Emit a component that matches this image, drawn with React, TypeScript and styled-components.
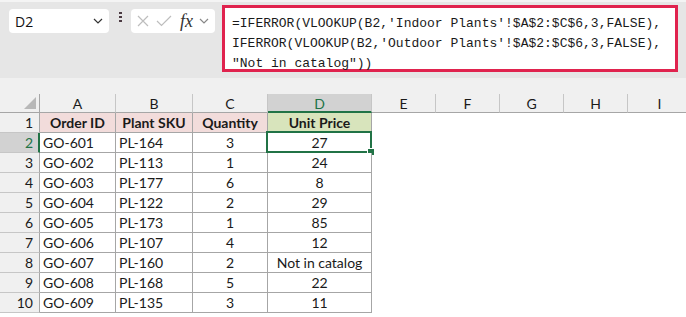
import { Fragment } from "react";
import styled, { createGlobalStyle } from "styled-components";

const GlobalStyle = createGlobalStyle`
  body {
    margin: 0;
    background: #ffffff;
    overflow: hidden;
  }
`;

const colors = {
  ribbon: "#e6e6e6",
  band: "#f0f0f0",
  headerSel: "#d2d2d2",
  green: "#217346",
  grid: "#a6a6a6",
  headerLine: "#c6c6c6",
  pink: "#f2dcdb",
  lime: "#d8e4bc",
  red: "#e0234e",
  text: "#1a1a1a",
};

const cellFont = `"Lato", "Open Sans", sans-serif`;

const Page = styled.div`
  width: 686px;
  height: 317px;
  overflow: hidden;
  font-family: ${cellFont};
`;

const FormulaArea = styled.div`
  height: 78px;
  background: ${colors.ribbon};
  border-top: 2px solid #f4f4f4;
  display: flex;
  align-items: flex-start;
  padding: 0 8px 0 9px;
  box-sizing: border-box;
`;

const NameBox = styled.div`
  margin-top: 7px;
  width: 100px;
  height: 24px;
  background: #fff;
  border-radius: 4px;
  box-sizing: border-box;
  display: flex;
  align-items: center;
  justify-content: space-between;
  padding: 0 6px 0 6px;
  font-family: "Open Sans", sans-serif;
  font-size: 14px;
  color: #111;
`;

const Dots = styled.div`
  margin: 10px 0 0 0;
  width: 22px;
  display: flex;
  flex-direction: column;
  align-items: center;
  gap: 2px;

  span {
    width: 3px;
    height: 2px;
    background: #4b3a42;
  }
`;

const FxBox = styled.div`
  margin-top: 7px;
  width: 84px;
  height: 24px;
  background: #fff;
  border-radius: 4px;
  display: flex;
  align-items: center;
  padding: 0 4px 0 5px;
  box-sizing: border-box;
  gap: 6px;
`;

const FxLabel = styled.span`
  font-family: "Liberation Serif", serif;
  font-style: italic;
  font-size: 18px;
  color: #333;
  margin-left: 2px;
`;

const FormulaBox = styled.div`
  margin: 3px 0 0 7px;
  flex: 1;
  height: 67px;
  background: #fff;
  border: 3px solid ${colors.red};
  box-sizing: border-box;
  padding: 6px 0 0 7px;
  font-family: "Liberation Mono", monospace;
  font-size: 13px;
  line-height: 20px;
  color: ${colors.text};
  white-space: pre;
`;

const Band = styled.div`
  height: 16px;
  background: ${colors.band};
`;

const Sheet = styled.div`
  display: grid;
  grid-template-columns: 40px 76px 77px 75px 104px 64px 64px 64px 64px 64px;
  grid-template-rows: 19px repeat(10, 20px);
`;

const Corner = styled.div`
  background: ${colors.band};
  border-right: 1px solid ${colors.grid};
  border-bottom: 1px solid ${colors.grid};
  box-sizing: border-box;
  position: relative;

  &::after {
    content: "";
    position: absolute;
    right: 3px;
    bottom: 3px;
    border-left: 12px solid transparent;
    border-bottom: 12px solid #b8b8b8;
  }
`;

const ColHead = styled.div<{ $sel?: boolean }>`
  background: ${(p) => (p.$sel ? colors.headerSel : colors.band)};
  border-right: 1px solid ${colors.headerLine};
  border-bottom: ${(p) =>
    p.$sel ? `2px solid ${colors.green}` : `1px solid ${colors.grid}`};
  box-sizing: border-box;
  display: flex;
  align-items: center;
  justify-content: center;
  font-size: 14px;
  color: ${(p) => (p.$sel ? colors.green : colors.text)};
  padding-top: ${(p) => (p.$sel ? "1px" : "0")};
`;

const RowHead = styled.div<{ $sel?: boolean }>`
  background: ${(p) => (p.$sel ? colors.headerSel : colors.band)};
  border-right: ${(p) =>
    p.$sel ? `2px solid ${colors.green}` : `1px solid ${colors.grid}`};
  border-bottom: 1px solid ${colors.headerLine};
  box-sizing: border-box;
  display: flex;
  align-items: center;
  justify-content: flex-end;
  padding-right: ${(p) => (p.$sel ? "5px" : "6px")};
  font-size: 14px;
  color: ${(p) => (p.$sel ? colors.green : colors.text)};
`;

const Cell = styled.div<{ $bg?: string; $align?: string; $bold?: boolean }>`
  background: ${(p) => p.$bg || "#fff"};
  border-right: 1px solid ${colors.grid};
  border-bottom: 1px solid ${colors.grid};
  box-sizing: border-box;
  display: flex;
  align-items: center;
  justify-content: ${(p) => p.$align || "flex-start"};
  padding: 0 3px;
  font-size: 14px;
  font-weight: ${(p) => (p.$bold ? 700 : 400)};
  color: ${colors.text};
  white-space: nowrap;
  position: relative;
`;

const Blank = styled.div`
  background: #fff;
`;

const Selection = styled.div`
  position: absolute;
  left: -2px;
  top: -2px;
  right: -1px;
  bottom: -1px;
  border: 2px solid ${colors.green};
  pointer-events: none;

  &::after {
    content: "";
    position: absolute;
    right: -5px;
    bottom: -5px;
    width: 6px;
    height: 6px;
    background: ${colors.green};
    border: 1px solid #fff;
  }
`;

const Chevron = ({ color }: { color: string }) => (
  <svg width="10" height="6" viewBox="0 0 10 6">
    <path d="M1 1 L5 5 L9 1" fill="none" stroke={color} strokeWidth="1.2" />
  </svg>
);

const rows = [
  ["GO-601", "PL-164", "3", "27"],
  ["GO-602", "PL-113", "1", "24"],
  ["GO-603", "PL-177", "6", "8"],
  ["GO-604", "PL-122", "2", "29"],
  ["GO-605", "PL-173", "1", "85"],
  ["GO-606", "PL-107", "4", "12"],
  ["GO-607", "PL-160", "2", "Not in catalog"],
  ["GO-608", "PL-168", "5", "22"],
  ["GO-609", "PL-135", "3", "11"],
];

const letters = ["A", "B", "C", "D", "E", "F", "G", "H", "I"];
const spare = [0, 1, 2, 3, 4];

const formula = `=IFERROR(VLOOKUP(B2,'Indoor Plants'!$A$2:$C$6,3,FALSE),
IFERROR(VLOOKUP(B2,'Outdoor Plants'!$A$2:$C$6,3,FALSE),
"Not in catalog"))`;

const App = () => {
  return (
    <Page>
      <GlobalStyle />
      <FormulaArea>
        <NameBox>
          <span>D2</span>
          <Chevron color="#333" />
        </NameBox>
        <Dots>
          <span />
          <span />
          <span />
        </Dots>
        <FxBox>
          <svg width="14" height="14" viewBox="0 0 14 14">
            <path d="M2 2 L12 12 M12 2 L2 12" stroke="#bdbdbd" strokeWidth="1.2" />
          </svg>
          <svg width="16" height="14" viewBox="0 0 16 14">
            <path d="M1 7 L5.5 11.5 L15 2" fill="none" stroke="#bdbdbd" strokeWidth="1.2" />
          </svg>
          <FxLabel>fx</FxLabel>
          <Chevron color="#888" />
        </FxBox>
        <FormulaBox>{formula}</FormulaBox>
      </FormulaArea>
      <Band />
      <Sheet>
        <Corner />
        {letters.map((l) => (
          <ColHead key={l} $sel={l === "D"}>
            {l}
          </ColHead>
        ))}

        <RowHead>1</RowHead>
        <Cell $bg={colors.pink} $align="center" $bold>Order ID</Cell>
        <Cell $bg={colors.pink} $align="center" $bold>Plant SKU</Cell>
        <Cell $bg={colors.pink} $align="center" $bold>Quantity</Cell>
        <Cell $bg={colors.lime} $align="center" $bold>Unit Price</Cell>
        {spare.map((i) => (
          <Blank key={i} />
        ))}

        {rows.map((r, i) => (
          <Fragment key={r[0]}>
            <RowHead $sel={i === 0}>{i + 2}</RowHead>
            <Cell>{r[0]}</Cell>
            <Cell>{r[1]}</Cell>
            <Cell $align="center">{r[2]}</Cell>
            <Cell $align="center">
              {r[3]}
              {i === 0 && <Selection />}
            </Cell>
            {spare.map((j) => (
              <Blank key={j} />
            ))}
          </Fragment>
        ))}
      </Sheet>
    </Page>
  );
};

export default App;
